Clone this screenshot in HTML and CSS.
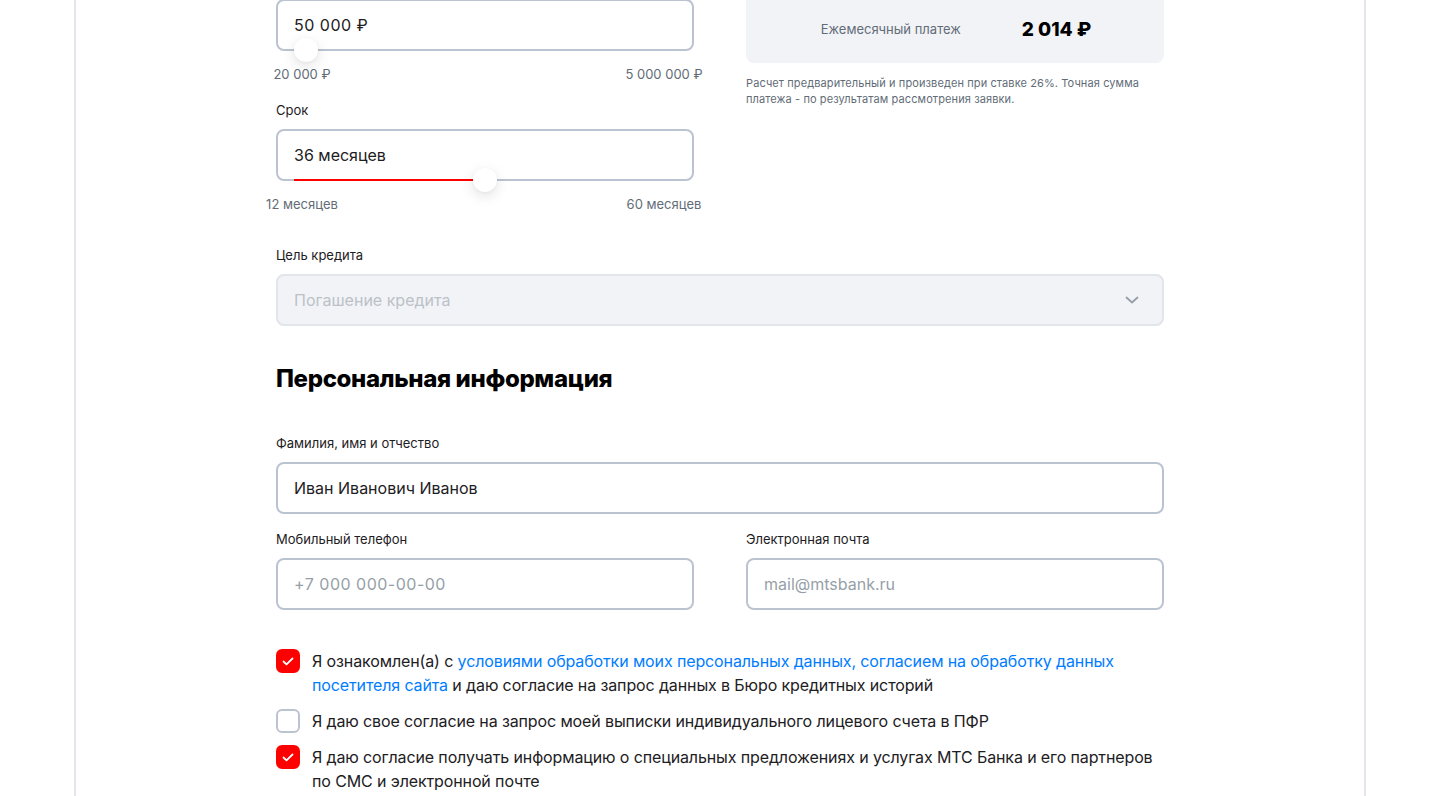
FILE: index.html
```html
<!DOCTYPE html>
<html lang="ru">
<head>
<meta charset="utf-8">
<title>Кредит</title>
<link rel="stylesheet" href="styles.css">
</head>
<body>
<div class="page">
  <div class="card">
    <div class="content">
      <div class="calc">
        <div class="calc-left">
          <div class="field">
            <div class="label">Сумма кредита</div>
            <div class="input range-input">
              <span class="num">50 000 ₽</span>
              <div class="track"><div class="fill" style="width:12px"></div><div class="knob" style="left:12px"></div></div>
            </div>
            <div class="range-labels"><span>20 000 ₽</span><span>5 000 000 ₽</span></div>
          </div>
          <div class="field">
            <div class="label">Срок</div>
            <div class="input range-input">
              <span>36 месяцев</span>
              <div class="track"><div class="fill" style="width:191px"></div><div class="knob" style="left:191px"></div></div>
            </div>
            <div class="range-labels"><span>12 месяцев</span><span>60 месяцев</span></div>
          </div>
        </div>
        <div class="calc-right">
          <div class="payment">
            <span class="payment-label">Ежемесячный платеж</span>
            <span class="payment-value">2 014 ₽</span>
          </div>
          <p class="note">Расчет предварительный и произведен при ставке 26%. Точная сумма платежа - по результатам рассмотрения заявки.</p>
        </div>
      </div>

      <div class="field purpose">
        <div class="label">Цель кредита</div>
        <div class="input select">
          <span class="placeholder-light">Погашение кредита</span>
          <svg class="chevron" width="14" height="8" viewBox="0 0 14 8"><path d="M1.5 1.5 L7 6.5 L12.5 1.5" fill="none" stroke="#969fa8" stroke-width="1.8" stroke-linecap="round" stroke-linejoin="round"/></svg>
        </div>
      </div>

      <h2 class="section-title">Персональная информация</h2>

      <div class="field">
        <div class="label">Фамилия, имя и отчество</div>
        <div class="input"><span>Иван Иванович Иванов</span></div>
      </div>

      <div class="pair">
        <div class="field">
          <div class="label">Мобильный телефон</div>
          <div class="input"><span class="placeholder num">+7 000 000-00-00</span></div>
        </div>
        <div class="field">
          <div class="label">Электронная почта</div>
          <div class="input"><span class="placeholder">mail@mtsbank.ru</span></div>
        </div>
      </div>

      <div class="checks">
        <div class="check">
          <span class="box checked"><svg width="12" height="9" viewBox="0 0 12 9"><path d="M1.5 4.5 L4.5 7.3 L10.5 1.5" fill="none" stroke="#fff" stroke-width="1.8" stroke-linecap="round" stroke-linejoin="round"/></svg></span>
          <p>Я ознакомлен(а) с <a href="#">условиями обработки моих персональных данных, согласием на обработку данных посетителя сайта</a> и даю согласие на запрос данных в Бюро кредитных историй</p>
        </div>
        <div class="check">
          <span class="box"></span>
          <p>Я даю свое согласие на запрос моей выписки индивидуального лицевого счета в ПФР</p>
        </div>
        <div class="check">
          <span class="box checked"><svg width="12" height="9" viewBox="0 0 12 9"><path d="M1.5 4.5 L4.5 7.3 L10.5 1.5" fill="none" stroke="#fff" stroke-width="1.8" stroke-linecap="round" stroke-linejoin="round"/></svg></span>
          <p>Я даю согласие получать информацию о специальных предложениях и услугах МТС Банка и его партнеров по СМС и электронной почте</p>
        </div>
      </div>
    </div>
  </div>
</div>
</body>
</html>
```

FILE: styles.css
```css
* { box-sizing: border-box; }
html, body { margin: 0; padding: 0; background: #fff; }
body {
  font-family: Inter, "Noto Sans", "Liberation Sans", sans-serif;
  color: #1d2023;
  overflow: hidden;
}
.page {
  margin-top: -30px;
}
.card {
  width: 1292px;
  margin: 0 auto;
  border-left: 2px solid #e3e5ec;
  border-right: 2px solid #e3e5ec;
  min-height: 900px;
  padding-bottom: 40px;
}
.content {
  width: 888px;
  margin: 0 auto;
}
.calc {
  display: grid;
  grid-template-columns: 418px 418px;
  column-gap: 52px;
}
.calc-left {
  display: flex;
  flex-direction: column;
  gap: 18px;
}
.field {
  display: flex;
  flex-direction: column;
}
.label {
  font-size: 13px;
  line-height: 20px;
  margin-bottom: 9px;
  color: #1d2023;
}
.input {
  height: 52px;
  border: 2px solid #bcc3d0;
  border-radius: 8px;
  display: flex;
  align-items: center;
  padding: 0 16px;
  font-size: 16px;
  line-height: 24px;
  position: relative;
  background: #fff;
}
.num { letter-spacing: 0.5px; }
.range-input .track {
  position: absolute;
  left: 16px;
  right: 16px;
  bottom: -2px;
  height: 2px;
}
.range-input .fill {
  height: 2px;
  background: #ff0000;
}
.range-input .knob {
  position: absolute;
  top: -11px;
  width: 24px;
  height: 24px;
  margin-left: -12px;
  border-radius: 50%;
  background: #fff;
  box-shadow: 0 4px 14px rgba(0, 0, 0, 0.12), 0 1px 3px rgba(0,0,0,0.04);
}
.range-labels {
  display: flex;
  justify-content: space-between;
  margin: 15px -10px 0 -14px;
  font-size: 13px;
  line-height: 16px;
  color: #626c77;
}
.range-labels span {
  width: 80px;
  text-align: center;
  white-space: nowrap;
}
.calc-right {
  display: flex;
  flex-direction: column;
}
.payment {
  height: 93px;
  background: #f2f3f7;
  border-radius: 8px;
  display: flex;
  align-items: center;
  justify-content: center;
  gap: 61px;
  padding-top: 25px;
  padding-left: 2px;
}
.payment-label {
  font-size: 13px;
  color: #626c77;
}
.payment-value {
  font-size: 19px;
  font-weight: 800;
  color: #000;
}
.note {
  margin: 12px 0 0;
  font-size: 11px;
  line-height: 16px;
  letter-spacing: 0.1px;
  color: #626c77;
}
.purpose {
  margin-top: 33px;
}
.select {
  background: #f2f3f7;
  border-color: #e2e5eb;
  justify-content: space-between;
}
.placeholder-light { color: #bbc1c7; }
.placeholder { color: #969fa8; }
.chevron { margin-right: 7px; }
.section-title {
  margin: 37px 0 38px;
  font-size: 24px;
  line-height: 32px;
  font-weight: 800;
  letter-spacing: -0.35px;
  color: #000;
}
.pair {
  display: grid;
  grid-template-columns: 418px 418px;
  column-gap: 52px;
  margin-top: 15px;
}
.checks {
  margin-top: 39px;
  display: flex;
  flex-direction: column;
  gap: 12px;
}
.check {
  display: flex;
  gap: 12px;
  align-items: flex-start;
}
.box {
  flex: 0 0 24px;
  width: 24px;
  height: 24px;
  border: 2px solid #bcc3d0;
  border-radius: 6px;
  display: flex;
  align-items: center;
  justify-content: center;
}
.box.checked {
  background: #ff0000;
  border-color: #ff0000;
}
.check p {
  margin: 0;
  font-size: 16px;
  line-height: 24px;
  letter-spacing: -0.12px;
  max-width: 852px;
}
.check a {
  color: #007cff;
  text-decoration: none;
}
```
